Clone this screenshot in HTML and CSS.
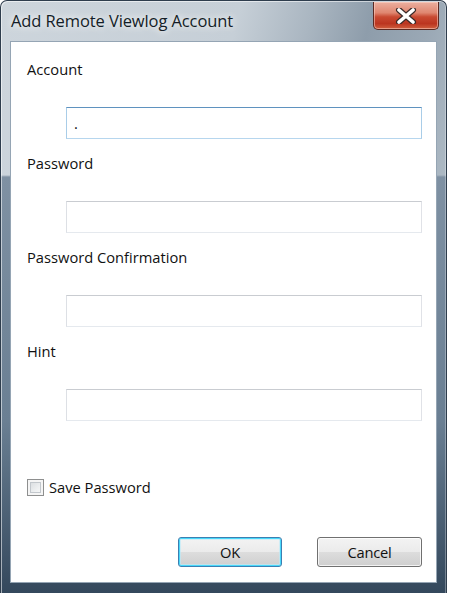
FILE: index.html
```html
<!DOCTYPE html>
<html lang="en">
<head>
<meta charset="utf-8">
<title>Add Remote Viewlog Account</title>
<link rel="stylesheet" href="styles.css">
</head>
<body>
<div class="window">
  <div class="titlebar">
    <div class="title">Add Remote Viewlog Account</div>
    <div class="close">
      <svg width="22" height="16" viewBox="0 0 22 16" aria-hidden="true">
        <path d="M4 2 L18 14 M18 2 L4 14" stroke="#3a2a28" stroke-width="6" stroke-linecap="round" fill="none"/>
        <path d="M4 2 L18 14 M18 2 L4 14" stroke="#ffffff" stroke-width="3.6" stroke-linecap="round" fill="none"/>
      </svg>
    </div>
  </div>
  <div class="content">
    <div class="group">
      <div class="label">Account</div>
      <input class="field focused" type="text" value=".">
    </div>
    <div class="group">
      <div class="label">Password</div>
      <input class="field" type="password" value="">
    </div>
    <div class="group">
      <div class="label">Password Confirmation</div>
      <input class="field" type="password" value="">
    </div>
    <div class="group last">
      <div class="label">Hint</div>
      <input class="field" type="text" value="">
    </div>
    <label class="check-row">
      <span class="checkbox"></span>
      <span class="check-text">Save Password</span>
    </label>
    <div class="buttons">
      <button class="btn default" type="button">OK</button>
      <button class="btn" type="button">Cancel</button>
    </div>
  </div>
</div>
</body>
</html>
```
FILE: styles.css
```css
html, body {
  margin: 0;
  padding: 0;
  background: #ffffff;
}

body {
  font-family: "Open Sans", "Noto Sans", "DejaVu Sans", sans-serif;
  width: 449px;
  height: 593px;
  overflow: hidden;
}

.window {
  width: 447px;
  height: 593px;
  box-sizing: border-box;
  border: 1px solid #2e3d4d;
  border-bottom: none;
  border-radius: 7px 7px 0 0;
  padding: 0 9px 10px 9px;
  display: flex;
  flex-direction: column;
  background:
    linear-gradient(to bottom, rgba(0,0,0,0) 0, rgba(0,0,0,0) 174px, #7f91a3 176px, #6a7f93 420px, #34485c 100%),
    linear-gradient(105deg, #cdd5dc 0%, #c6cfd7 40%, #aab6c1 52%, #8e9dab 62%, #9aa8b5 72%, #b2bec8 84%, #a7b4bf 100%);
  box-shadow: inset 1px 1px 0 rgba(255,255,255,0.55), inset -1px 0 0 rgba(255,255,255,0.3);
}

.titlebar {
  height: 40px;
  display: flex;
  align-items: center;
  justify-content: space-between;
}

.title {
  font-size: 16.5px;
  color: #141d27;
  padding-left: 1px;
  margin-top: -1px;
  letter-spacing: -0.1px;
  text-shadow: 0 0 6px rgba(255,255,255,0.9), 0 0 12px rgba(255,255,255,0.7);
}

.close {
  align-self: flex-start;
  width: 66px;
  height: 28px;
  margin-top: 1px;
  margin-right: -2px;
  box-sizing: border-box;
  border: 1px solid #5d2a22;
  border-top: none;
  border-radius: 0 0 5px 5px;
  background: linear-gradient(to bottom, #ebb0a0 0%, #df8670 40%, #c94a32 55%, #bb3520 80%, #d0603f 100%);
  box-shadow: inset 0 0 0 1px rgba(255,220,210,0.5);
  display: flex;
  align-items: center;
  justify-content: center;
}

.content {
  flex: 1;
  background: #ffffff;
  border: 1px solid #95a5b4;
  padding: 17px 13px 0 16px;
  display: flex;
  flex-direction: column;
}

.group {
  display: flex;
  flex-direction: column;
  align-items: flex-start;
  margin-bottom: 14px;
}

.group.last {
  margin-bottom: 0;
}

.label {
  font-size: 14.7px;
  line-height: 20px;
  height: 20px;
  color: #111111;
  margin-bottom: 28px;
  white-space: nowrap;
}

.field {
  display: block;
  margin: 0 0 0 39px;
  width: 356px;
  height: 32px;
  box-sizing: border-box;
  border: 1px solid;
  border-color: #c9ccd1 #e0e2e7 #e5e9ee #dde0e5;
  background: #ffffff;
  padding: 0 0 0 7px;
  font-family: "Open Sans", "Noto Sans", sans-serif;
  font-size: 14.7px;
  color: #111111;
  outline: none;
}

.field.focused {
  border-color: #5f92bf #a9cde8 #b6d6ee #a9cde8;
}

.check-row {
  display: flex;
  align-items: center;
  margin-top: 57px;
  height: 18px;
}

.checkbox {
  width: 17px;
  height: 17px;
  box-sizing: border-box;
  border: 1px solid #8e8f8f;
  background: linear-gradient(135deg, #d3d6da 0%, #eef0f1 60%, #fafafa 100%);
  box-shadow: inset 0 0 0 2px #f5f5f5, inset 0 0 0 3px #c2c7cc;
}

.check-text {
  margin-left: 5px;
  font-size: 14.7px;
  line-height: 20px;
  color: #111111;
}

.buttons {
  display: flex;
  justify-content: flex-end;
  gap: 35px;
  margin-top: 41px;
  margin-right: 1px;
}

.btn {
  width: 105px;
  height: 30px;
  box-sizing: border-box;
  border: 1px solid #707070;
  border-radius: 3px;
  background: linear-gradient(to bottom, #f3f3f3 0%, #ebebeb 49%, #dddddd 50%, #cfcfcf 100%);
  box-shadow: inset 0 0 0 1px rgba(255,255,255,0.75);
  font-family: "Open Sans", "Noto Sans", sans-serif;
  font-size: 14.7px;
  color: #111111;
  padding: 0;
  letter-spacing: -0.2px;
}

.btn.default {
  width: 104px;
  border-color: #3c7fb1;
  box-shadow: inset 0 0 0 1px #48d8fb, inset 0 0 0 2px rgba(185,235,250,0.6);
}
```
